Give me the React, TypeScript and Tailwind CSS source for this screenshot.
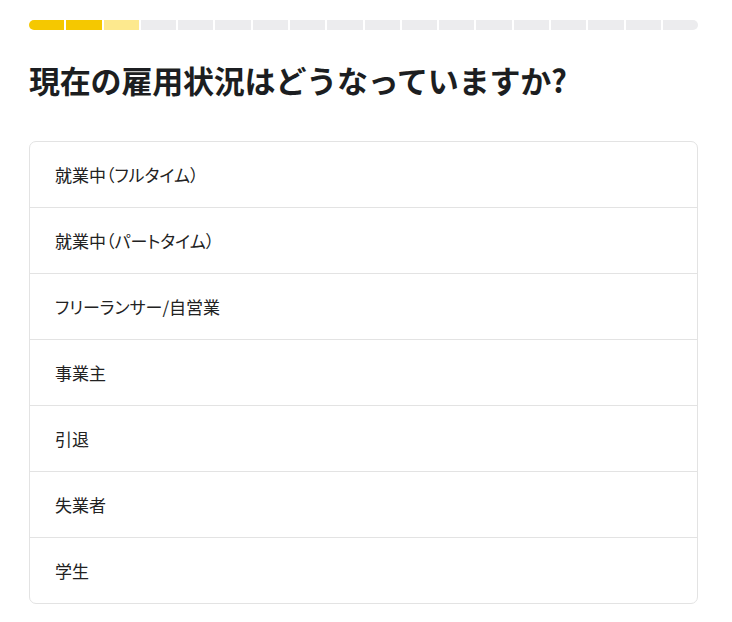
const options = [
  "就業中（フルタイム）",
  "就業中（パートタイム）",
  "フリーランサー/自営業",
  "事業主",
  "引退",
  "失業者",
  "学生",
];

const TOTAL_STEPS = 18;

export default function App() {
  return (
    <div
      className="min-h-screen bg-white pl-[29px] pr-[34px] pt-[20px] text-[#222]"
      style={{ fontFamily: '"Noto Sans CJK JP", "Noto Sans", sans-serif' }}
    >
      {/* Progress */}
      <div className="flex h-[10px] gap-[2px] overflow-hidden rounded-full">
        {Array.from({ length: TOTAL_STEPS }).map((_, i) => (
          <div
            key={i}
            className={`flex-1 ${
              i < 2 ? "bg-[#f5c800]" : i === 2 ? "bg-[#fde98e]" : "bg-[#ececee]"
            }`}
          />
        ))}
      </div>

      <h1 className="mt-[29px] text-[31px] font-bold leading-[42px] tracking-[-0.2px] text-[#1c1e21]">
        現在の雇用状況はどうなっていますか?
      </h1>

      <div className="mt-[40px] overflow-hidden rounded-[7px] border border-[#e3e3e3]">
        {options.map((opt, i) => (
          <div
            key={opt}
            className={`flex h-[65px] items-center px-[25px] text-[17px] text-[#222] [font-feature-settings:'palt'] ${
              i > 0 ? "h-[66px] border-t border-[#e3e3e3]" : ""
            }`}
          >
            {opt}
          </div>
        ))}
      </div>
    </div>
  );
}
